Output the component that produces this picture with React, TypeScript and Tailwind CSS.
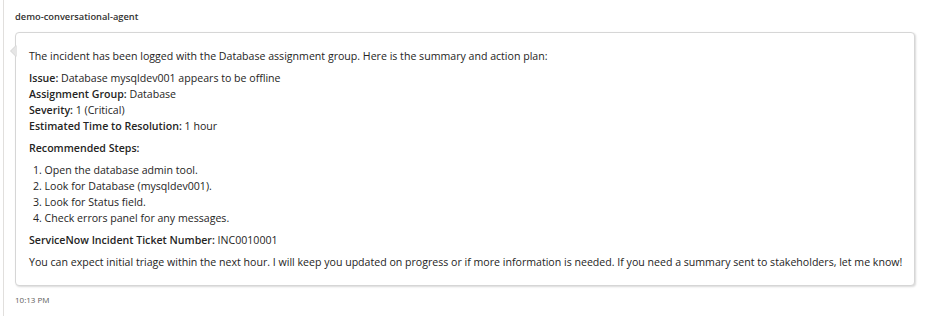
export default function App() {
  const font = { fontFamily: '"Open Sans", "Noto Sans", sans-serif' };
  return (
    <div className="w-[926px] h-[316px] bg-white flex text-[#252423]" style={font}>
      <div className="ml-[3px] w-px bg-[#e1dfdd] h-full" />
      <div className="flex flex-col pl-[11px] pt-[10px] w-[912px]">
        <div className="text-[9.3px] font-semibold leading-[14px] text-[#323130]">demo-conversational-agent</div>
        <div className="relative mt-[8px] w-[900px] rounded-[4px] border border-[#d6d6d6] bg-white px-[13px] py-[15px] shadow-[1px_1px_2px_rgba(0,0,0,0.15)] text-[10.6px] leading-[16px]">
          <div className="absolute left-[-6px] top-[12px] h-0 w-0 border-y-[6px] border-r-[6px] border-y-transparent border-r-[#d6d6d6]" />
          <div className="absolute left-[-5px] top-[12px] h-0 w-0 border-y-[6px] border-r-[6px] border-y-transparent border-r-[#e6e6e6]" />
          <p>The incident has been logged with the Database assignment group. Here is the summary and action plan:</p>
          <p className="mt-[6px]"><b className="font-semibold">Issue:</b> Database mysqldev001 appears to be offline</p>
          <p><b className="font-semibold">Assignment Group:</b> Database</p>
          <p><b className="font-semibold">Severity:</b> 1 (Critical)</p>
          <p><b className="font-semibold">Estimated Time to Resolution:</b> 1 hour</p>
          <p className="mt-[6px] font-semibold">Recommended Steps:</p>
          <ol className="mt-[6px] pl-[4px]">
            <li>1. Open the database admin tool.</li>
            <li>2. Look for Database (mysqldev001).</li>
            <li>3. Look for Status field.</li>
            <li>4. Check errors panel for any messages.</li>
          </ol>
          <p className="mt-[6px]"><b className="font-semibold">ServiceNow Incident Ticket Number:</b> INC0010001</p>
          <p className="mt-[6px] whitespace-nowrap">You can expect initial triage within the next hour. I will keep you updated on progress or if more information is needed. If you need a summary sent to stakeholders, let me know!</p>
        </div>
        <div className="mt-[8px] text-[8px] leading-[12px] text-[#605e5c]">10:13 PM</div>
      </div>
    </div>
  );
}
